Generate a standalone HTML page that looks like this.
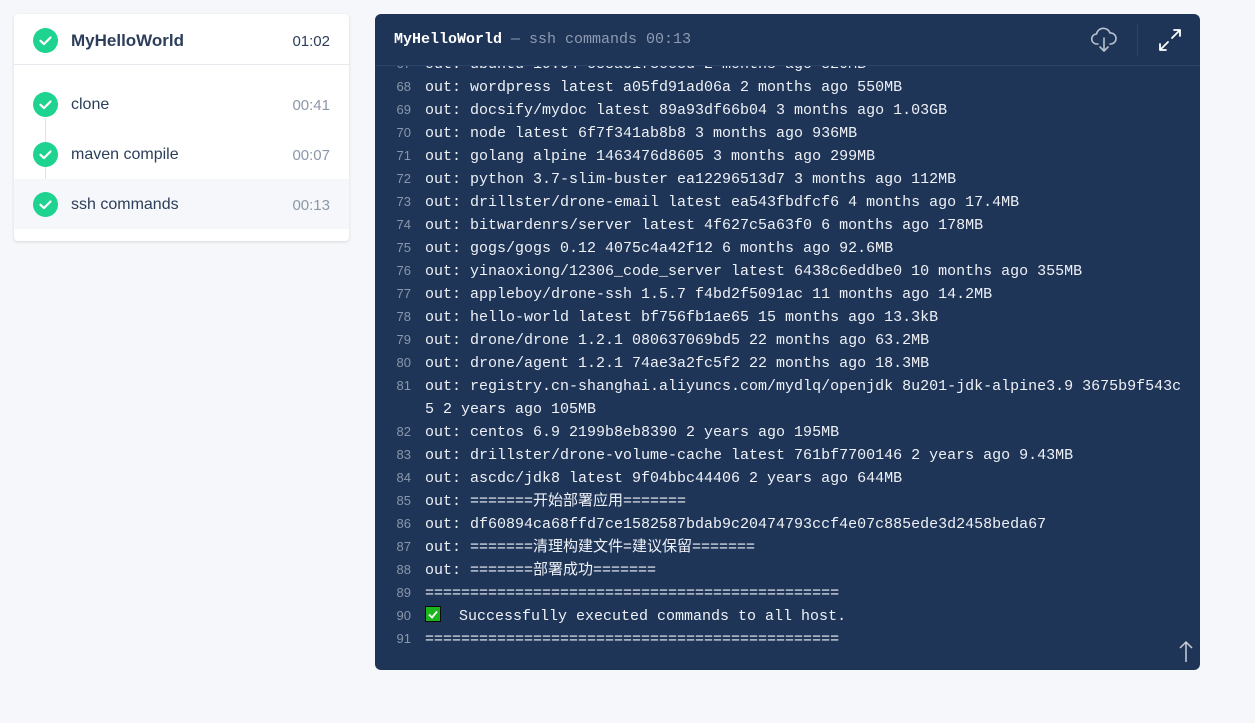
<!DOCTYPE html>
<html><head><meta charset="utf-8"><style>
*{margin:0;padding:0;box-sizing:border-box}
body{width:1255px;height:723px;background:#f5f7fa;font-family:"Liberation Sans","Noto Sans CJK SC",sans-serif;position:relative;overflow:hidden}
.side{position:absolute;left:14px;top:14px;width:335px;height:227px;background:#fff;border-radius:4px;box-shadow:0 1px 3px rgba(0,0,0,.12)}
.hd{height:51px;border-bottom:1px solid #e6e9ee;position:relative}
.ck{position:absolute;left:19px;width:25px;height:25px;border-radius:50%;background:#1ed38f}
.ck svg{position:absolute;left:0;top:0}
.row{position:absolute;left:0;width:335px;height:50px}
.nm{position:absolute;left:57px;font-size:16px;color:#2c3e5a}
.tm{position:absolute;right:19px;font-size:15px;color:#8c97a8}
.line{position:absolute;left:31px;width:1px;background:#dfe3e9;top:104px;height:100px}
.card{position:absolute;left:375px;top:14px;width:825px;height:656px;background:#1f3558;border-radius:6px;overflow:hidden}
.th{height:52px;border-bottom:1px solid #2b4269;position:relative}
.tt{position:absolute;left:19px;top:17px;font-family:"Liberation Mono",monospace;font-size:15px;color:#8e9bb0}
.tt b{color:#fff}
.log{position:absolute;left:0;top:52px;width:825px;height:604px;overflow:hidden}
.in{position:absolute;left:0;top:-13px;width:825px}
.l{height:23px;line-height:23px;position:relative;white-space:pre;font-family:"Liberation Mono","Noto Sans CJK SC",monospace;font-size:15px;color:#eef1f6}
.l i{position:absolute;left:0;width:36px;text-align:right;font-style:normal;font-family:"Liberation Sans",sans-serif;font-size:13px;color:#8a97aa;top:-1px}
.l span{position:absolute;left:50px}
.em{display:inline-block;width:16px;height:16px;background:#1cb51c;border:1px solid #0a0a0a;vertical-align:-2px;position:relative}
</style></head><body>
<div class="side">
 <div class="hd">
  <div class="ck" style="top:14px"><svg width="25" height="25"><path d="M7.5 12.8l3.4 3.3 6.6-6.6" fill="none" stroke="#fff" stroke-width="2.2" stroke-linecap="round" stroke-linejoin="round"/></svg></div>
  <div class="nm" style="top:17px;font-size:17px;font-weight:bold;color:#2c3e5a">MyHelloWorld</div>
  <div class="tm" style="top:19px;color:#2c3e5a">01:02</div>
 </div>
 <div class="line"></div>
 <div class="row" style="top:65px"><div class="ck" style="top:13px"><svg width="25" height="25"><path d="M7.5 12.8l3.4 3.3 6.6-6.6" fill="none" stroke="#fff" stroke-width="2.2" stroke-linecap="round" stroke-linejoin="round"/></svg></div><div class="nm" style="top:17px">clone</div><div class="tm" style="top:18px">00:41</div></div>
 <div class="row" style="top:115px"><div class="ck" style="top:13px"><svg width="25" height="25"><path d="M7.5 12.8l3.4 3.3 6.6-6.6" fill="none" stroke="#fff" stroke-width="2.2" stroke-linecap="round" stroke-linejoin="round"/></svg></div><div class="nm" style="top:17px">maven compile</div><div class="tm" style="top:18px">00:07</div></div>
 <div class="row" style="top:165px;background:#f5f7fa"><div class="ck" style="top:13px"><svg width="25" height="25"><path d="M7.5 12.8l3.4 3.3 6.6-6.6" fill="none" stroke="#fff" stroke-width="2.2" stroke-linecap="round" stroke-linejoin="round"/></svg></div><div class="nm" style="top:17px">ssh commands</div><div class="tm" style="top:18px">00:13</div></div>
</div>
<div class="card">
 <div class="th">
  <div class="tt"><b>MyHelloWorld</b> — ssh commands 00:13</div>
  <svg style="position:absolute;left:715px;top:11px" width="28" height="30" viewBox="0 0 28 30"><path d="M8 19H7a5 5 0 0 1-.5-10A7 7 0 0 1 20 8a5 5 0 0 1 1 11h-1" fill="none" stroke="#b8c1cf" stroke-width="1.6" stroke-linecap="round"/><path d="M14 13v13M10 22l4 4 4-4" fill="none" stroke="#b8c1cf" stroke-width="1.6" stroke-linecap="round" stroke-linejoin="round"/></svg>
  <div style="position:absolute;left:762px;top:10px;width:1px;height:32px;background:#2d4469"></div>
  <svg style="position:absolute;left:782px;top:13px" width="26" height="26" viewBox="0 0 26 26"><path d="M15 11l8-8M17 3h6v6M11 15l-8 8M3 17v6h6" fill="none" stroke="#fff" stroke-width="1.8" stroke-linecap="round" stroke-linejoin="round"/></svg>
 </div>
 <div class="log"><div class="in">
<div class="l"><i>67</i><span>out: ubuntu 19.04 c88ac1f3ee3d 2 months ago 820MB</span></div>
<div class="l"><i>68</i><span>out: wordpress latest a05fd91ad06a 2 months ago 550MB</span></div>
<div class="l"><i>69</i><span>out: docsify/mydoc latest 89a93df66b04 3 months ago 1.03GB</span></div>
<div class="l"><i>70</i><span>out: node latest 6f7f341ab8b8 3 months ago 936MB</span></div>
<div class="l"><i>71</i><span>out: golang alpine 1463476d8605 3 months ago 299MB</span></div>
<div class="l"><i>72</i><span>out: python 3.7-slim-buster ea12296513d7 3 months ago 112MB</span></div>
<div class="l"><i>73</i><span>out: drillster/drone-email latest ea543fbdfcf6 4 months ago 17.4MB</span></div>
<div class="l"><i>74</i><span>out: bitwardenrs/server latest 4f627c5a63f0 6 months ago 178MB</span></div>
<div class="l"><i>75</i><span>out: gogs/gogs 0.12 4075c4a42f12 6 months ago 92.6MB</span></div>
<div class="l"><i>76</i><span>out: yinaoxiong/12306_code_server latest 6438c6eddbe0 10 months ago 355MB</span></div>
<div class="l"><i>77</i><span>out: appleboy/drone-ssh 1.5.7 f4bd2f5091ac 11 months ago 14.2MB</span></div>
<div class="l"><i>78</i><span>out: hello-world latest bf756fb1ae65 15 months ago 13.3kB</span></div>
<div class="l"><i>79</i><span>out: drone/drone 1.2.1 080637069bd5 22 months ago 63.2MB</span></div>
<div class="l"><i>80</i><span>out: drone/agent 1.2.1 74ae3a2fc5f2 22 months ago 18.3MB</span></div>
<div class="l"><i>81</i><span>out: registry.cn-shanghai.aliyuncs.com/mydlq/openjdk 8u201-jdk-alpine3.9 3675b9f543c</span></div>
<div class="l"><span>5 2 years ago 105MB</span></div>
<div class="l"><i>82</i><span>out: centos 6.9 2199b8eb8390 2 years ago 195MB</span></div>
<div class="l"><i>83</i><span>out: drillster/drone-volume-cache latest 761bf7700146 2 years ago 9.43MB</span></div>
<div class="l"><i>84</i><span>out: ascdc/jdk8 latest 9f04bbc44406 2 years ago 644MB</span></div>
<div class="l"><i>85</i><span>out: =======开始部署应用=======</span></div>
<div class="l"><i>86</i><span>out: df60894ca68ffd7ce1582587bdab9c20474793ccf4e07c885ede3d2458beda67</span></div>
<div class="l"><i>87</i><span>out: =======清理构建文件=建议保留=======</span></div>
<div class="l"><i>88</i><span>out: =======部署成功=======</span></div>
<div class="l"><i>89</i><span>==============================================</span></div>
<div class="l"><i>90</i><span><b class="em"><svg width="14" height="14" style="position:absolute;left:0;top:0"><path d="M3 7.5l3 3 5-6" fill="none" stroke="#fff" stroke-width="1.8"/></svg></b>  Successfully executed commands to all host.</span></div>
<div class="l"><i>91</i><span>==============================================</span></div>
 </div></div>
 <svg style="position:absolute;left:802px;top:626px" width="18" height="24" viewBox="0 0 18 24"><path d="M9 22V2M3 8l6-6 6 6" fill="none" stroke="#c9d0db" stroke-width="1.5"/></svg>
</div>
</body></html>
